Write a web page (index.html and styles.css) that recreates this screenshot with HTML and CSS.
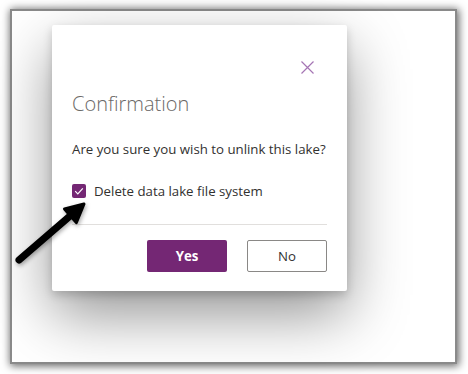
FILE: index.html
```html
<!DOCTYPE html>
<html lang="en">
  <head>
    <meta charset="utf-8">
    <title>Confirmation</title>
    <link rel="stylesheet" href="styles.css">
  </head>
  <body>
    <div class="frame">
      <div class="dialog">
        <div class="dialog_top">
          <svg class="close_icon" width="13" height="13" viewBox="0 0 13 13">
            <path d="M0.5 0.5 L12.5 12.5 M12.5 0.5 L0.5 12.5" stroke="#a575b4" stroke-width="1.2" fill="none"/>
          </svg>
        </div>
        <div class="dialog_title">Confirmation</div>
        <div class="dialog_text">Are you sure you wish to unlink this lake?</div>
        <label class="check_row">
          <span class="check_box">
            <svg width="14" height="14" viewBox="0 0 14 14">
              <path d="M3.2 7.2 L5.8 9.8 L10.8 4.4" stroke="#fff" stroke-width="1.2" fill="none"/>
            </svg>
          </span>
          <span>Delete data lake file system</span>
        </label>
        <div class="divider"></div>
        <div class="buttons">
          <div class="btn btn_yes">Yes</div>
          <div class="btn btn_no">No</div>
        </div>
      </div>
    </div>
    <!-- callout arrow drawn over the screenshot -->
    <svg class="arrow" width="100" height="280" viewBox="0 0 100 280">
      <line x1="19" y1="260" x2="70" y2="216" stroke="#000" stroke-width="7" stroke-linecap="round"/>
      <polygon points="84,204 76.3,222.6 64.5,209" fill="#000" stroke="#000" stroke-width="3" stroke-linejoin="round"/>
    </svg>
  </body>
</html>
```

FILE: styles.css
```css
html, body {
  margin: 0;
  padding: 0;
}
body {
  background: #fff;
  font-family: "Open Sans", "Noto Sans", sans-serif;
  position: relative;
  width: 468px;
  height: 374px;
  overflow: hidden;
  padding: 9px 0 0 10px;
  box-sizing: border-box;
}
.frame {
  width: 447px;
  height: 355px;
  box-sizing: border-box;
  border: 2px solid #8a8a8a;
  background: #fff;
  box-shadow: 1px 1px 8px 1px rgba(0, 0, 0, 0.6);
  padding: 14px 0 0 40px;
}
.dialog {
  width: 295px;
  height: 266px;
  box-sizing: border-box;
  background: #fff;
  border-radius: 2px;
  box-shadow: 0 24px 60px rgba(0, 0, 0, 0.42), 0 4px 10px rgba(0, 0, 0, 0.18);
  padding: 36px 20px 19px 20px;
  display: flex;
  flex-direction: column;
}
.dialog_top {
  display: flex;
  justify-content: flex-end;
  padding-right: 13px;
  height: 13px;
}
.close_icon {
  display: block;
}
.dialog_title {
  margin-top: 16px;
  font-size: 20px;
  font-weight: 300;
  line-height: 28px;
  color: #6b6967;
}
.dialog_text {
  margin-top: 21px;
  font-size: 13.25px;
  line-height: 20px;
  color: #323130;
}
.check_row {
  margin-top: 22px;
  display: flex;
  align-items: center;
  gap: 8px;
  font-size: 13.25px;
  line-height: 20px;
  color: #323130;
}
.check_box {
  width: 14px;
  height: 14px;
  background: #742774;
  border-radius: 2px;
  display: flex;
}
.divider {
  margin-top: 23px;
  height: 1px;
  background: #e1dfdd;
}
.buttons {
  margin-top: 15px;
  display: flex;
  justify-content: flex-end;
  gap: 20px;
}
.btn {
  width: 80px;
  height: 32px;
  box-sizing: border-box;
  border-radius: 2px;
  display: flex;
  align-items: center;
  justify-content: center;
  font-size: 13.25px;
}
.btn_yes {
  background: #742774;
  color: #fff;
  font-weight: 700;
}
.btn_no {
  background: #fff;
  border: 1px solid #8a8886;
  color: #323130;
}
.arrow {
  position: absolute;
  left: 0;
  top: 0;
  filter: drop-shadow(1px 2px 2px rgba(0, 0, 0, 0.35));
}
```
